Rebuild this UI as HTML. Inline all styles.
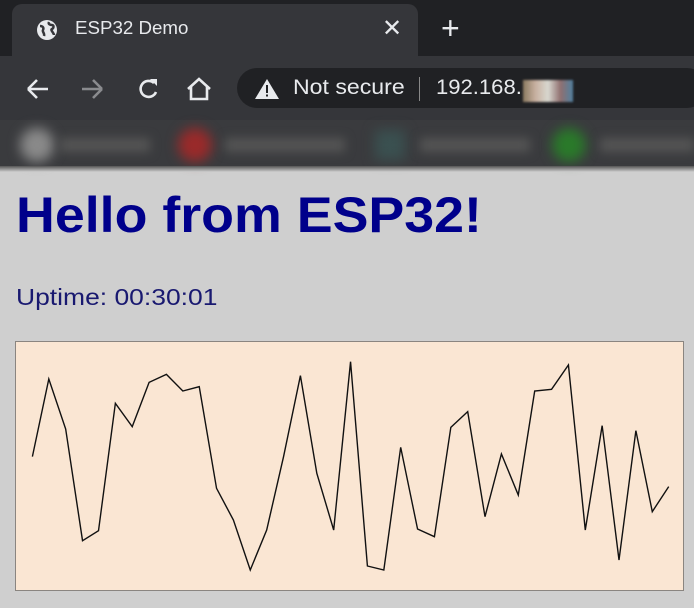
<!DOCTYPE html>
<html><head><style>
body{margin:0;width:694px;height:608px;overflow:hidden;background:#cfcfcf;font-family:"Liberation Sans",Arial,sans-serif;position:relative}
.abs{position:absolute}
</style></head><body>
<div class="abs" style="left:0;top:0;width:694px;height:56px;background:#202124"></div>
<div class="abs" style="left:12px;top:4px;width:406px;height:54px;background:#35363a;border-radius:10px 10px 0 0"></div>
<svg class="abs" style="left:36px;top:19px" width="22" height="22" viewBox="0 0 22 22"><circle cx="11" cy="11" r="10" fill="#e8eaed"/><path d="M4 7c3 0 4 2 3 4s2 3 1 6M13 3c-1 2 1 3 3 3s2 3 0 4 2 4 2 6" stroke="#35363a" stroke-width="2.5" fill="none"/></svg>
<div class="abs" style="left:75px;top:18px;color:#e8eaed;font-size:18px;transform:scaleX(1.04);transform-origin:left">ESP32 Demo</div>
<div class="abs" style="left:382px;top:14px;color:#e8eaed;font-size:24px">✕</div>
<div class="abs" style="left:441px;top:10px;color:#e8eaed;font-size:32px;font-weight:300">+</div>
<div class="abs" style="left:0;top:56px;width:694px;height:64px;background:#35363a"></div>
<div class="abs" style="left:237px;top:68px;width:470px;height:40px;background:#202124;border-radius:20px"></div>
<svg class="abs" style="left:24px;top:76px" width="200" height="26" viewBox="0 0 200 26">
<path d="M4 13h20M4 13l9-9M4 13l9 9" stroke="#e8eaed" stroke-width="2.6" fill="none"/>
<path d="M58 13h20M78 13l-9-9M78 13l-9 9" stroke="#8a8b8e" stroke-width="2.6" fill="none"/>
<path d="M130 7a8 8 0 1 0 2 9" stroke="#e8eaed" stroke-width="2.6" fill="none"/><path d="M126 3h7v7z" fill="#e8eaed"/>
<path d="M164 13l11-10 11 10M167 11v12h16v-12" stroke="#e8eaed" stroke-width="2.6" fill="none"/>
</svg>
<svg class="abs" style="left:254px;top:78px" width="26" height="22" viewBox="0 0 26 22"><path d="M13 1L25 21H1z" fill="#e8eaed"/><rect x="12" y="7" width="2" height="8" fill="#202124"/><rect x="12" y="16.5" width="2" height="2" fill="#202124"/></svg>
<div class="abs" style="left:293px;top:76px;color:#e8eaed;font-size:21px;transform:scaleX(1.1);transform-origin:left">Not secure</div>
<div class="abs" style="left:419px;top:77px;width:1px;height:24px;background:#888"></div>
<div class="abs" style="left:436px;top:76px;color:#e8eaed;font-size:21px;transform:scaleX(1.05);transform-origin:left">192.168.</div>
<div class="abs" style="left:523px;top:80px;width:50px;height:22px;background:linear-gradient(90deg,#8a7a60,#c8b0a0,#d8d8d0,#907070,#5080a0);filter:blur(1px)"></div>
<div class="abs" style="left:0;top:120px;width:694px;height:52px;background:#3a3b3e"></div>
<div class="abs" style="left:20px;top:128px;width:34px;height:34px;border-radius:50%;background:#8a8a8a;filter:blur(6px)"></div>
<div class="abs" style="left:60px;top:138px;width:90px;height:14px;background:#555;filter:blur(5px)"></div>
<div class="abs" style="left:178px;top:128px;width:34px;height:34px;border-radius:50%;background:#9a2a2a;filter:blur(6px)"></div>
<div class="abs" style="left:225px;top:138px;width:120px;height:14px;background:#555;filter:blur(5px)"></div>
<div class="abs" style="left:375px;top:130px;width:30px;height:30px;background:#3a5050;filter:blur(6px)"></div>
<div class="abs" style="left:420px;top:138px;width:110px;height:14px;background:#555;filter:blur(5px)"></div>
<div class="abs" style="left:552px;top:128px;width:34px;height:34px;border-radius:50%;background:#2a7a2a;filter:blur(6px)"></div>
<div class="abs" style="left:600px;top:138px;width:94px;height:14px;background:#555;filter:blur(5px)"></div>
<div class="abs" style="left:0;top:166px;width:694px;height:6px;background:linear-gradient(#555,#cfcfcf)"></div>
<div class="abs" style="left:16px;top:186px;color:#00008b;font-size:50px;font-weight:bold;white-space:nowrap;transform:scaleX(1.075);transform-origin:left">Hello from ESP32!</div>
<div class="abs" style="left:16px;top:284px;color:#191970;font-size:23px;white-space:nowrap;transform:scaleX(1.15);transform-origin:left">Uptime: 00:30:01</div>
<div class="abs" style="left:15px;top:341px;width:667px;height:248px;background:#fae6d3;border:1px solid #8a8580"></div>
<svg class="abs" style="left:0;top:330px" width="694" height="278" viewBox="0 0 1564 834" preserveAspectRatio="none">
<polyline fill="none" stroke="#111" stroke-width="1.4" vector-effect="non-scaling-stroke" points="73,380 110,147 148,297 186,632 222,602 260,220 298,290 336,157 375,133 412,183 449,170 488,475 526,570 564,720 601,600 639,380 677,137 714,430 752,600 790,95 828,708 865,720 903,352 941,597 979,620 1016,292 1054,245 1093,560 1130,372 1168,495 1205,183 1243,178 1281,105 1319,600 1357,287 1395,690 1433,302 1470,545 1507,470"/>
</svg>
</body></html>
